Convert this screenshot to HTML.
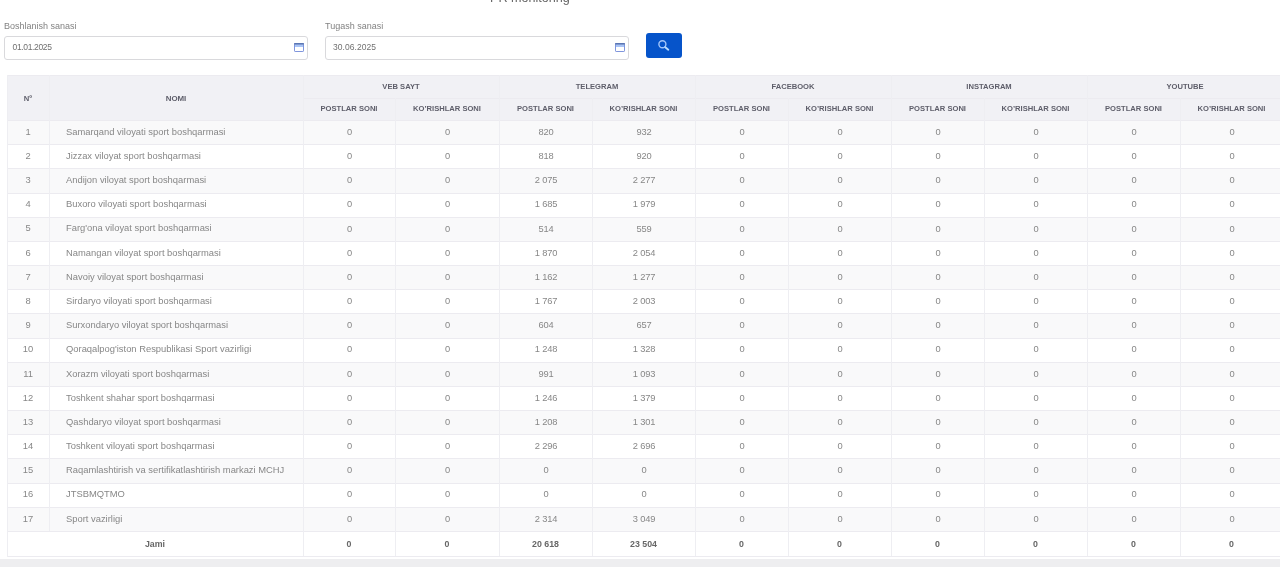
<!DOCTYPE html><html><head><meta charset="utf-8"><style>
*{margin:0;padding:0;box-sizing:border-box}
html,body{width:1280px;height:567px;overflow:hidden;background:#fff;font-family:"Liberation Sans",sans-serif}
.a{position:absolute}
.hl{position:absolute;height:1px;background:#ecebf0}
.vl{position:absolute;width:1px;background:#eeeef2}
.c{position:absolute;display:flex;align-items:center;justify-content:center;white-space:nowrap}
.th{font-weight:700;font-size:7.6px;color:#5e5e6a;padding-bottom:1px}
.td{font-size:9.4px;color:#878787;padding-bottom:1.6px}
.tn{font-size:9.3px;letter-spacing:-0.12px;padding-left:1px;padding-bottom:0.5px}
.tdl{justify-content:flex-start}
.tot{font-weight:700;font-size:8.8px;color:#676767}
.lbl{position:absolute;font-size:9px;color:#838383;white-space:nowrap}
.inp{position:absolute;border:1px solid #d9d9dc;border-radius:3px;background:#fff}
.iv{position:absolute;font-size:8.5px;color:#707070;white-space:nowrap}
</style></head><body><div id="w" style="position:absolute;left:0;top:0;width:1280px;height:567px;will-change:transform"><div class="a" style="left:490px;top:-8.7px;font-size:12.6px;color:#666;white-space:nowrap">PR monitoring</div>
<div class="lbl" style="left:4px;top:21px">Boshlanish sanasi</div>
<div class="lbl" style="left:325px;top:21px">Tugash sanasi</div>
<div class="inp" style="left:4px;top:36px;width:304px;height:24px"></div>
<div class="inp" style="left:325px;top:36px;width:304px;height:24px"></div>
<div class="iv" style="left:12.5px;top:41.5px;letter-spacing:-0.35px">01.01.2025</div>
<div class="iv" style="left:333px;top:41.5px;letter-spacing:0.05px">30.06.2025</div>
<svg class="a" style="left:294px;top:42.8px" width="10" height="9" viewBox="0 0 10 9"><rect x="0.5" y="0.5" width="9" height="8" rx="0.6" fill="#fff" stroke="#7f95dc" stroke-width="1"/><rect x="1" y="1.2" width="8" height="2.8" fill="#a9c4f6"/><rect x="0.2" y="0" width="9.6" height="1.6" fill="#5a76b4"/></svg>
<svg class="a" style="left:615px;top:42.8px" width="10" height="9" viewBox="0 0 10 9"><rect x="0.5" y="0.5" width="9" height="8" rx="0.6" fill="#fff" stroke="#7f95dc" stroke-width="1"/><rect x="1" y="1.2" width="8" height="2.8" fill="#a9c4f6"/><rect x="0.2" y="0" width="9.6" height="1.6" fill="#5a76b4"/></svg>
<div class="a" style="left:646px;top:33px;width:36px;height:25px;background:#0654ca;border-radius:3px"></div>
<svg class="a" style="left:656px;top:38px" width="16" height="16" viewBox="0 0 16 16"><circle cx="6.4" cy="6.3" r="3.5" fill="none" stroke="#a4c6fa" stroke-width="1.4"/><line x1="9.3" y1="9.2" x2="12.3" y2="11.7" stroke="#b8dcff" stroke-width="1.9" stroke-linecap="round"/></svg>
<div class="a" style="left:7px;top:75px;width:1276px;height:45px;background:#f1f1f5"></div>
<div class="a" style="left:7px;top:120.000px;width:1276px;height:24.176px;background:#f9f9fa"></div>
<div class="a" style="left:7px;top:168.353px;width:1276px;height:24.176px;background:#f9f9fa"></div>
<div class="a" style="left:7px;top:216.706px;width:1276px;height:24.176px;background:#f9f9fa"></div>
<div class="a" style="left:7px;top:265.059px;width:1276px;height:24.176px;background:#f9f9fa"></div>
<div class="a" style="left:7px;top:313.412px;width:1276px;height:24.176px;background:#f9f9fa"></div>
<div class="a" style="left:7px;top:361.765px;width:1276px;height:24.176px;background:#f9f9fa"></div>
<div class="a" style="left:7px;top:410.118px;width:1276px;height:24.176px;background:#f9f9fa"></div>
<div class="a" style="left:7px;top:458.471px;width:1276px;height:24.176px;background:#f9f9fa"></div>
<div class="a" style="left:7px;top:506.824px;width:1276px;height:24.176px;background:#f9f9fa"></div>
<div class="hl" style="left:7px;top:75px;width:1276px"></div>
<div class="hl" style="left:303px;top:98px;width:980px"></div>
<div class="hl" style="left:7px;top:120px;width:1276px"></div>
<div class="hl" style="left:7px;top:144.176px;width:1276px"></div>
<div class="hl" style="left:7px;top:168.353px;width:1276px"></div>
<div class="hl" style="left:7px;top:192.529px;width:1276px"></div>
<div class="hl" style="left:7px;top:216.706px;width:1276px"></div>
<div class="hl" style="left:7px;top:240.882px;width:1276px"></div>
<div class="hl" style="left:7px;top:265.059px;width:1276px"></div>
<div class="hl" style="left:7px;top:289.235px;width:1276px"></div>
<div class="hl" style="left:7px;top:313.412px;width:1276px"></div>
<div class="hl" style="left:7px;top:337.588px;width:1276px"></div>
<div class="hl" style="left:7px;top:361.765px;width:1276px"></div>
<div class="hl" style="left:7px;top:385.941px;width:1276px"></div>
<div class="hl" style="left:7px;top:410.118px;width:1276px"></div>
<div class="hl" style="left:7px;top:434.294px;width:1276px"></div>
<div class="hl" style="left:7px;top:458.471px;width:1276px"></div>
<div class="hl" style="left:7px;top:482.647px;width:1276px"></div>
<div class="hl" style="left:7px;top:506.824px;width:1276px"></div>
<div class="hl" style="left:7px;top:531.000px;width:1276px"></div>
<div class="hl" style="left:7px;top:556px;width:1276px"></div>
<div class="vl" style="left:7px;top:75px;height:482px"></div>
<div class="vl" style="left:49px;top:75px;height:456px"></div>
<div class="vl" style="left:303px;top:75px;height:481px"></div>
<div class="vl" style="left:395px;top:98px;height:458px"></div>
<div class="vl" style="left:499px;top:75px;height:481px"></div>
<div class="vl" style="left:592px;top:98px;height:458px"></div>
<div class="vl" style="left:695px;top:75px;height:481px"></div>
<div class="vl" style="left:788px;top:98px;height:458px"></div>
<div class="vl" style="left:891px;top:75px;height:481px"></div>
<div class="vl" style="left:984px;top:98px;height:458px"></div>
<div class="vl" style="left:1087px;top:75px;height:481px"></div>
<div class="vl" style="left:1180px;top:98px;height:458px"></div>
<div class="c th" style="left:7px;top:75.000px;width:42px;height:45.000px;padding:1px 0 0 0">N&ordm;</div>
<div class="c th" style="left:49px;top:75.000px;width:254px;height:45.000px;padding:1px 0 0 0;font-size:7.9px">NOMI</div>
<div class="c th" style="left:303px;top:75.000px;width:196px;height:23.000px;">VEB SAYT</div>
<div class="c th" style="left:303px;top:98.000px;width:92px;height:22.000px;">POSTLAR SONI</div>
<div class="c th" style="left:395px;top:98.000px;width:104px;height:22.000px;">KO&rsquo;RISHLAR SONI</div>
<div class="c th" style="left:499px;top:75.000px;width:196px;height:23.000px;">TELEGRAM</div>
<div class="c th" style="left:499px;top:98.000px;width:93px;height:22.000px;">POSTLAR SONI</div>
<div class="c th" style="left:592px;top:98.000px;width:103px;height:22.000px;">KO&rsquo;RISHLAR SONI</div>
<div class="c th" style="left:695px;top:75.000px;width:196px;height:23.000px;">FACEBOOK</div>
<div class="c th" style="left:695px;top:98.000px;width:93px;height:22.000px;">POSTLAR SONI</div>
<div class="c th" style="left:788px;top:98.000px;width:103px;height:22.000px;">KO&rsquo;RISHLAR SONI</div>
<div class="c th" style="left:891px;top:75.000px;width:196px;height:23.000px;">INSTAGRAM</div>
<div class="c th" style="left:891px;top:98.000px;width:93px;height:22.000px;">POSTLAR SONI</div>
<div class="c th" style="left:984px;top:98.000px;width:103px;height:22.000px;">KO&rsquo;RISHLAR SONI</div>
<div class="c th" style="left:1087px;top:75.000px;width:196px;height:23.000px;">YOUTUBE</div>
<div class="c th" style="left:1087px;top:98.000px;width:93px;height:22.000px;">POSTLAR SONI</div>
<div class="c th" style="left:1180px;top:98.000px;width:103px;height:22.000px;">KO&rsquo;RISHLAR SONI</div>
<div class="c td" style="left:7px;top:120.000px;width:42px;height:24.176px;">1</div>
<div class="c td tdl" style="left:66px;top:120.000px;width:237px;height:24.176px;">Samarqand viloyati sport boshqarmasi</div>
<div class="c td tn" style="left:303px;top:120.000px;width:92px;height:24.176px;">0</div>
<div class="c td tn" style="left:395px;top:120.000px;width:104px;height:24.176px;">0</div>
<div class="c td tn" style="left:499px;top:120.000px;width:93px;height:24.176px;">820</div>
<div class="c td tn" style="left:592px;top:120.000px;width:103px;height:24.176px;">932</div>
<div class="c td tn" style="left:695px;top:120.000px;width:93px;height:24.176px;">0</div>
<div class="c td tn" style="left:788px;top:120.000px;width:103px;height:24.176px;">0</div>
<div class="c td tn" style="left:891px;top:120.000px;width:93px;height:24.176px;">0</div>
<div class="c td tn" style="left:984px;top:120.000px;width:103px;height:24.176px;">0</div>
<div class="c td tn" style="left:1087px;top:120.000px;width:93px;height:24.176px;">0</div>
<div class="c td tn" style="left:1180px;top:120.000px;width:103px;height:24.176px;">0</div>
<div class="c td" style="left:7px;top:144.176px;width:42px;height:24.176px;">2</div>
<div class="c td tdl" style="left:66px;top:144.176px;width:237px;height:24.176px;">Jizzax viloyat sport boshqarmasi</div>
<div class="c td tn" style="left:303px;top:144.176px;width:92px;height:24.176px;">0</div>
<div class="c td tn" style="left:395px;top:144.176px;width:104px;height:24.176px;">0</div>
<div class="c td tn" style="left:499px;top:144.176px;width:93px;height:24.176px;">818</div>
<div class="c td tn" style="left:592px;top:144.176px;width:103px;height:24.176px;">920</div>
<div class="c td tn" style="left:695px;top:144.176px;width:93px;height:24.176px;">0</div>
<div class="c td tn" style="left:788px;top:144.176px;width:103px;height:24.176px;">0</div>
<div class="c td tn" style="left:891px;top:144.176px;width:93px;height:24.176px;">0</div>
<div class="c td tn" style="left:984px;top:144.176px;width:103px;height:24.176px;">0</div>
<div class="c td tn" style="left:1087px;top:144.176px;width:93px;height:24.176px;">0</div>
<div class="c td tn" style="left:1180px;top:144.176px;width:103px;height:24.176px;">0</div>
<div class="c td" style="left:7px;top:168.353px;width:42px;height:24.176px;">3</div>
<div class="c td tdl" style="left:66px;top:168.353px;width:237px;height:24.176px;">Andijon viloyat sport boshqarmasi</div>
<div class="c td tn" style="left:303px;top:168.353px;width:92px;height:24.176px;">0</div>
<div class="c td tn" style="left:395px;top:168.353px;width:104px;height:24.176px;">0</div>
<div class="c td tn" style="left:499px;top:168.353px;width:93px;height:24.176px;">2 075</div>
<div class="c td tn" style="left:592px;top:168.353px;width:103px;height:24.176px;">2 277</div>
<div class="c td tn" style="left:695px;top:168.353px;width:93px;height:24.176px;">0</div>
<div class="c td tn" style="left:788px;top:168.353px;width:103px;height:24.176px;">0</div>
<div class="c td tn" style="left:891px;top:168.353px;width:93px;height:24.176px;">0</div>
<div class="c td tn" style="left:984px;top:168.353px;width:103px;height:24.176px;">0</div>
<div class="c td tn" style="left:1087px;top:168.353px;width:93px;height:24.176px;">0</div>
<div class="c td tn" style="left:1180px;top:168.353px;width:103px;height:24.176px;">0</div>
<div class="c td" style="left:7px;top:192.529px;width:42px;height:24.176px;">4</div>
<div class="c td tdl" style="left:66px;top:192.529px;width:237px;height:24.176px;">Buxoro viloyati sport boshqarmasi</div>
<div class="c td tn" style="left:303px;top:192.529px;width:92px;height:24.176px;">0</div>
<div class="c td tn" style="left:395px;top:192.529px;width:104px;height:24.176px;">0</div>
<div class="c td tn" style="left:499px;top:192.529px;width:93px;height:24.176px;">1 685</div>
<div class="c td tn" style="left:592px;top:192.529px;width:103px;height:24.176px;">1 979</div>
<div class="c td tn" style="left:695px;top:192.529px;width:93px;height:24.176px;">0</div>
<div class="c td tn" style="left:788px;top:192.529px;width:103px;height:24.176px;">0</div>
<div class="c td tn" style="left:891px;top:192.529px;width:93px;height:24.176px;">0</div>
<div class="c td tn" style="left:984px;top:192.529px;width:103px;height:24.176px;">0</div>
<div class="c td tn" style="left:1087px;top:192.529px;width:93px;height:24.176px;">0</div>
<div class="c td tn" style="left:1180px;top:192.529px;width:103px;height:24.176px;">0</div>
<div class="c td" style="left:7px;top:216.706px;width:42px;height:24.176px;">5</div>
<div class="c td tdl" style="left:66px;top:216.706px;width:237px;height:24.176px;">Farg'ona viloyat sport boshqarmasi</div>
<div class="c td tn" style="left:303px;top:216.706px;width:92px;height:24.176px;">0</div>
<div class="c td tn" style="left:395px;top:216.706px;width:104px;height:24.176px;">0</div>
<div class="c td tn" style="left:499px;top:216.706px;width:93px;height:24.176px;">514</div>
<div class="c td tn" style="left:592px;top:216.706px;width:103px;height:24.176px;">559</div>
<div class="c td tn" style="left:695px;top:216.706px;width:93px;height:24.176px;">0</div>
<div class="c td tn" style="left:788px;top:216.706px;width:103px;height:24.176px;">0</div>
<div class="c td tn" style="left:891px;top:216.706px;width:93px;height:24.176px;">0</div>
<div class="c td tn" style="left:984px;top:216.706px;width:103px;height:24.176px;">0</div>
<div class="c td tn" style="left:1087px;top:216.706px;width:93px;height:24.176px;">0</div>
<div class="c td tn" style="left:1180px;top:216.706px;width:103px;height:24.176px;">0</div>
<div class="c td" style="left:7px;top:240.882px;width:42px;height:24.176px;">6</div>
<div class="c td tdl" style="left:66px;top:240.882px;width:237px;height:24.176px;">Namangan viloyat sport boshqarmasi</div>
<div class="c td tn" style="left:303px;top:240.882px;width:92px;height:24.176px;">0</div>
<div class="c td tn" style="left:395px;top:240.882px;width:104px;height:24.176px;">0</div>
<div class="c td tn" style="left:499px;top:240.882px;width:93px;height:24.176px;">1 870</div>
<div class="c td tn" style="left:592px;top:240.882px;width:103px;height:24.176px;">2 054</div>
<div class="c td tn" style="left:695px;top:240.882px;width:93px;height:24.176px;">0</div>
<div class="c td tn" style="left:788px;top:240.882px;width:103px;height:24.176px;">0</div>
<div class="c td tn" style="left:891px;top:240.882px;width:93px;height:24.176px;">0</div>
<div class="c td tn" style="left:984px;top:240.882px;width:103px;height:24.176px;">0</div>
<div class="c td tn" style="left:1087px;top:240.882px;width:93px;height:24.176px;">0</div>
<div class="c td tn" style="left:1180px;top:240.882px;width:103px;height:24.176px;">0</div>
<div class="c td" style="left:7px;top:265.059px;width:42px;height:24.176px;">7</div>
<div class="c td tdl" style="left:66px;top:265.059px;width:237px;height:24.176px;">Navoiy viloyat sport boshqarmasi</div>
<div class="c td tn" style="left:303px;top:265.059px;width:92px;height:24.176px;">0</div>
<div class="c td tn" style="left:395px;top:265.059px;width:104px;height:24.176px;">0</div>
<div class="c td tn" style="left:499px;top:265.059px;width:93px;height:24.176px;">1 162</div>
<div class="c td tn" style="left:592px;top:265.059px;width:103px;height:24.176px;">1 277</div>
<div class="c td tn" style="left:695px;top:265.059px;width:93px;height:24.176px;">0</div>
<div class="c td tn" style="left:788px;top:265.059px;width:103px;height:24.176px;">0</div>
<div class="c td tn" style="left:891px;top:265.059px;width:93px;height:24.176px;">0</div>
<div class="c td tn" style="left:984px;top:265.059px;width:103px;height:24.176px;">0</div>
<div class="c td tn" style="left:1087px;top:265.059px;width:93px;height:24.176px;">0</div>
<div class="c td tn" style="left:1180px;top:265.059px;width:103px;height:24.176px;">0</div>
<div class="c td" style="left:7px;top:289.235px;width:42px;height:24.176px;">8</div>
<div class="c td tdl" style="left:66px;top:289.235px;width:237px;height:24.176px;">Sirdaryo viloyati sport boshqarmasi</div>
<div class="c td tn" style="left:303px;top:289.235px;width:92px;height:24.176px;">0</div>
<div class="c td tn" style="left:395px;top:289.235px;width:104px;height:24.176px;">0</div>
<div class="c td tn" style="left:499px;top:289.235px;width:93px;height:24.176px;">1 767</div>
<div class="c td tn" style="left:592px;top:289.235px;width:103px;height:24.176px;">2 003</div>
<div class="c td tn" style="left:695px;top:289.235px;width:93px;height:24.176px;">0</div>
<div class="c td tn" style="left:788px;top:289.235px;width:103px;height:24.176px;">0</div>
<div class="c td tn" style="left:891px;top:289.235px;width:93px;height:24.176px;">0</div>
<div class="c td tn" style="left:984px;top:289.235px;width:103px;height:24.176px;">0</div>
<div class="c td tn" style="left:1087px;top:289.235px;width:93px;height:24.176px;">0</div>
<div class="c td tn" style="left:1180px;top:289.235px;width:103px;height:24.176px;">0</div>
<div class="c td" style="left:7px;top:313.412px;width:42px;height:24.176px;">9</div>
<div class="c td tdl" style="left:66px;top:313.412px;width:237px;height:24.176px;">Surxondaryo viloyat sport boshqarmasi</div>
<div class="c td tn" style="left:303px;top:313.412px;width:92px;height:24.176px;">0</div>
<div class="c td tn" style="left:395px;top:313.412px;width:104px;height:24.176px;">0</div>
<div class="c td tn" style="left:499px;top:313.412px;width:93px;height:24.176px;">604</div>
<div class="c td tn" style="left:592px;top:313.412px;width:103px;height:24.176px;">657</div>
<div class="c td tn" style="left:695px;top:313.412px;width:93px;height:24.176px;">0</div>
<div class="c td tn" style="left:788px;top:313.412px;width:103px;height:24.176px;">0</div>
<div class="c td tn" style="left:891px;top:313.412px;width:93px;height:24.176px;">0</div>
<div class="c td tn" style="left:984px;top:313.412px;width:103px;height:24.176px;">0</div>
<div class="c td tn" style="left:1087px;top:313.412px;width:93px;height:24.176px;">0</div>
<div class="c td tn" style="left:1180px;top:313.412px;width:103px;height:24.176px;">0</div>
<div class="c td" style="left:7px;top:337.588px;width:42px;height:24.176px;">10</div>
<div class="c td tdl" style="left:66px;top:337.588px;width:237px;height:24.176px;">Qoraqalpog'iston Respublikasi Sport vazirligi</div>
<div class="c td tn" style="left:303px;top:337.588px;width:92px;height:24.176px;">0</div>
<div class="c td tn" style="left:395px;top:337.588px;width:104px;height:24.176px;">0</div>
<div class="c td tn" style="left:499px;top:337.588px;width:93px;height:24.176px;">1 248</div>
<div class="c td tn" style="left:592px;top:337.588px;width:103px;height:24.176px;">1 328</div>
<div class="c td tn" style="left:695px;top:337.588px;width:93px;height:24.176px;">0</div>
<div class="c td tn" style="left:788px;top:337.588px;width:103px;height:24.176px;">0</div>
<div class="c td tn" style="left:891px;top:337.588px;width:93px;height:24.176px;">0</div>
<div class="c td tn" style="left:984px;top:337.588px;width:103px;height:24.176px;">0</div>
<div class="c td tn" style="left:1087px;top:337.588px;width:93px;height:24.176px;">0</div>
<div class="c td tn" style="left:1180px;top:337.588px;width:103px;height:24.176px;">0</div>
<div class="c td" style="left:7px;top:361.765px;width:42px;height:24.176px;">11</div>
<div class="c td tdl" style="left:66px;top:361.765px;width:237px;height:24.176px;">Xorazm viloyati sport boshqarmasi</div>
<div class="c td tn" style="left:303px;top:361.765px;width:92px;height:24.176px;">0</div>
<div class="c td tn" style="left:395px;top:361.765px;width:104px;height:24.176px;">0</div>
<div class="c td tn" style="left:499px;top:361.765px;width:93px;height:24.176px;">991</div>
<div class="c td tn" style="left:592px;top:361.765px;width:103px;height:24.176px;">1 093</div>
<div class="c td tn" style="left:695px;top:361.765px;width:93px;height:24.176px;">0</div>
<div class="c td tn" style="left:788px;top:361.765px;width:103px;height:24.176px;">0</div>
<div class="c td tn" style="left:891px;top:361.765px;width:93px;height:24.176px;">0</div>
<div class="c td tn" style="left:984px;top:361.765px;width:103px;height:24.176px;">0</div>
<div class="c td tn" style="left:1087px;top:361.765px;width:93px;height:24.176px;">0</div>
<div class="c td tn" style="left:1180px;top:361.765px;width:103px;height:24.176px;">0</div>
<div class="c td" style="left:7px;top:385.941px;width:42px;height:24.176px;">12</div>
<div class="c td tdl" style="left:66px;top:385.941px;width:237px;height:24.176px;">Toshkent shahar sport boshqarmasi</div>
<div class="c td tn" style="left:303px;top:385.941px;width:92px;height:24.176px;">0</div>
<div class="c td tn" style="left:395px;top:385.941px;width:104px;height:24.176px;">0</div>
<div class="c td tn" style="left:499px;top:385.941px;width:93px;height:24.176px;">1 246</div>
<div class="c td tn" style="left:592px;top:385.941px;width:103px;height:24.176px;">1 379</div>
<div class="c td tn" style="left:695px;top:385.941px;width:93px;height:24.176px;">0</div>
<div class="c td tn" style="left:788px;top:385.941px;width:103px;height:24.176px;">0</div>
<div class="c td tn" style="left:891px;top:385.941px;width:93px;height:24.176px;">0</div>
<div class="c td tn" style="left:984px;top:385.941px;width:103px;height:24.176px;">0</div>
<div class="c td tn" style="left:1087px;top:385.941px;width:93px;height:24.176px;">0</div>
<div class="c td tn" style="left:1180px;top:385.941px;width:103px;height:24.176px;">0</div>
<div class="c td" style="left:7px;top:410.118px;width:42px;height:24.176px;">13</div>
<div class="c td tdl" style="left:66px;top:410.118px;width:237px;height:24.176px;">Qashdaryo viloyat sport boshqarmasi</div>
<div class="c td tn" style="left:303px;top:410.118px;width:92px;height:24.176px;">0</div>
<div class="c td tn" style="left:395px;top:410.118px;width:104px;height:24.176px;">0</div>
<div class="c td tn" style="left:499px;top:410.118px;width:93px;height:24.176px;">1 208</div>
<div class="c td tn" style="left:592px;top:410.118px;width:103px;height:24.176px;">1 301</div>
<div class="c td tn" style="left:695px;top:410.118px;width:93px;height:24.176px;">0</div>
<div class="c td tn" style="left:788px;top:410.118px;width:103px;height:24.176px;">0</div>
<div class="c td tn" style="left:891px;top:410.118px;width:93px;height:24.176px;">0</div>
<div class="c td tn" style="left:984px;top:410.118px;width:103px;height:24.176px;">0</div>
<div class="c td tn" style="left:1087px;top:410.118px;width:93px;height:24.176px;">0</div>
<div class="c td tn" style="left:1180px;top:410.118px;width:103px;height:24.176px;">0</div>
<div class="c td" style="left:7px;top:434.294px;width:42px;height:24.176px;">14</div>
<div class="c td tdl" style="left:66px;top:434.294px;width:237px;height:24.176px;">Toshkent viloyati sport boshqarmasi</div>
<div class="c td tn" style="left:303px;top:434.294px;width:92px;height:24.176px;">0</div>
<div class="c td tn" style="left:395px;top:434.294px;width:104px;height:24.176px;">0</div>
<div class="c td tn" style="left:499px;top:434.294px;width:93px;height:24.176px;">2 296</div>
<div class="c td tn" style="left:592px;top:434.294px;width:103px;height:24.176px;">2 696</div>
<div class="c td tn" style="left:695px;top:434.294px;width:93px;height:24.176px;">0</div>
<div class="c td tn" style="left:788px;top:434.294px;width:103px;height:24.176px;">0</div>
<div class="c td tn" style="left:891px;top:434.294px;width:93px;height:24.176px;">0</div>
<div class="c td tn" style="left:984px;top:434.294px;width:103px;height:24.176px;">0</div>
<div class="c td tn" style="left:1087px;top:434.294px;width:93px;height:24.176px;">0</div>
<div class="c td tn" style="left:1180px;top:434.294px;width:103px;height:24.176px;">0</div>
<div class="c td" style="left:7px;top:458.471px;width:42px;height:24.176px;">15</div>
<div class="c td tdl" style="left:66px;top:458.471px;width:237px;height:24.176px;">Raqamlashtirish va sertifikatlashtirish markazi MCHJ</div>
<div class="c td tn" style="left:303px;top:458.471px;width:92px;height:24.176px;">0</div>
<div class="c td tn" style="left:395px;top:458.471px;width:104px;height:24.176px;">0</div>
<div class="c td tn" style="left:499px;top:458.471px;width:93px;height:24.176px;">0</div>
<div class="c td tn" style="left:592px;top:458.471px;width:103px;height:24.176px;">0</div>
<div class="c td tn" style="left:695px;top:458.471px;width:93px;height:24.176px;">0</div>
<div class="c td tn" style="left:788px;top:458.471px;width:103px;height:24.176px;">0</div>
<div class="c td tn" style="left:891px;top:458.471px;width:93px;height:24.176px;">0</div>
<div class="c td tn" style="left:984px;top:458.471px;width:103px;height:24.176px;">0</div>
<div class="c td tn" style="left:1087px;top:458.471px;width:93px;height:24.176px;">0</div>
<div class="c td tn" style="left:1180px;top:458.471px;width:103px;height:24.176px;">0</div>
<div class="c td" style="left:7px;top:482.647px;width:42px;height:24.176px;">16</div>
<div class="c td tdl" style="left:66px;top:482.647px;width:237px;height:24.176px;">JTSBMQTMO</div>
<div class="c td tn" style="left:303px;top:482.647px;width:92px;height:24.176px;">0</div>
<div class="c td tn" style="left:395px;top:482.647px;width:104px;height:24.176px;">0</div>
<div class="c td tn" style="left:499px;top:482.647px;width:93px;height:24.176px;">0</div>
<div class="c td tn" style="left:592px;top:482.647px;width:103px;height:24.176px;">0</div>
<div class="c td tn" style="left:695px;top:482.647px;width:93px;height:24.176px;">0</div>
<div class="c td tn" style="left:788px;top:482.647px;width:103px;height:24.176px;">0</div>
<div class="c td tn" style="left:891px;top:482.647px;width:93px;height:24.176px;">0</div>
<div class="c td tn" style="left:984px;top:482.647px;width:103px;height:24.176px;">0</div>
<div class="c td tn" style="left:1087px;top:482.647px;width:93px;height:24.176px;">0</div>
<div class="c td tn" style="left:1180px;top:482.647px;width:103px;height:24.176px;">0</div>
<div class="c td" style="left:7px;top:506.824px;width:42px;height:24.176px;">17</div>
<div class="c td tdl" style="left:66px;top:506.824px;width:237px;height:24.176px;">Sport vazirligi</div>
<div class="c td tn" style="left:303px;top:506.824px;width:92px;height:24.176px;">0</div>
<div class="c td tn" style="left:395px;top:506.824px;width:104px;height:24.176px;">0</div>
<div class="c td tn" style="left:499px;top:506.824px;width:93px;height:24.176px;">2 314</div>
<div class="c td tn" style="left:592px;top:506.824px;width:103px;height:24.176px;">3 049</div>
<div class="c td tn" style="left:695px;top:506.824px;width:93px;height:24.176px;">0</div>
<div class="c td tn" style="left:788px;top:506.824px;width:103px;height:24.176px;">0</div>
<div class="c td tn" style="left:891px;top:506.824px;width:93px;height:24.176px;">0</div>
<div class="c td tn" style="left:984px;top:506.824px;width:103px;height:24.176px;">0</div>
<div class="c td tn" style="left:1087px;top:506.824px;width:93px;height:24.176px;">0</div>
<div class="c td tn" style="left:1180px;top:506.824px;width:103px;height:24.176px;">0</div>
<div class="c tot" style="left:7px;top:531.000px;width:296px;height:25.000px;">Jami</div>
<div class="c tot" style="left:303px;top:531.000px;width:92px;height:25.000px;">0</div>
<div class="c tot" style="left:395px;top:531.000px;width:104px;height:25.000px;">0</div>
<div class="c tot" style="left:499px;top:531.000px;width:93px;height:25.000px;">20 618</div>
<div class="c tot" style="left:592px;top:531.000px;width:103px;height:25.000px;">23 504</div>
<div class="c tot" style="left:695px;top:531.000px;width:93px;height:25.000px;">0</div>
<div class="c tot" style="left:788px;top:531.000px;width:103px;height:25.000px;">0</div>
<div class="c tot" style="left:891px;top:531.000px;width:93px;height:25.000px;">0</div>
<div class="c tot" style="left:984px;top:531.000px;width:103px;height:25.000px;">0</div>
<div class="c tot" style="left:1087px;top:531.000px;width:93px;height:25.000px;">0</div>
<div class="c tot" style="left:1180px;top:531.000px;width:103px;height:25.000px;">0</div>
<div class="a" style="left:0;top:559px;width:1280px;height:8px;background:#eeeef0"></div></div></body></html>
